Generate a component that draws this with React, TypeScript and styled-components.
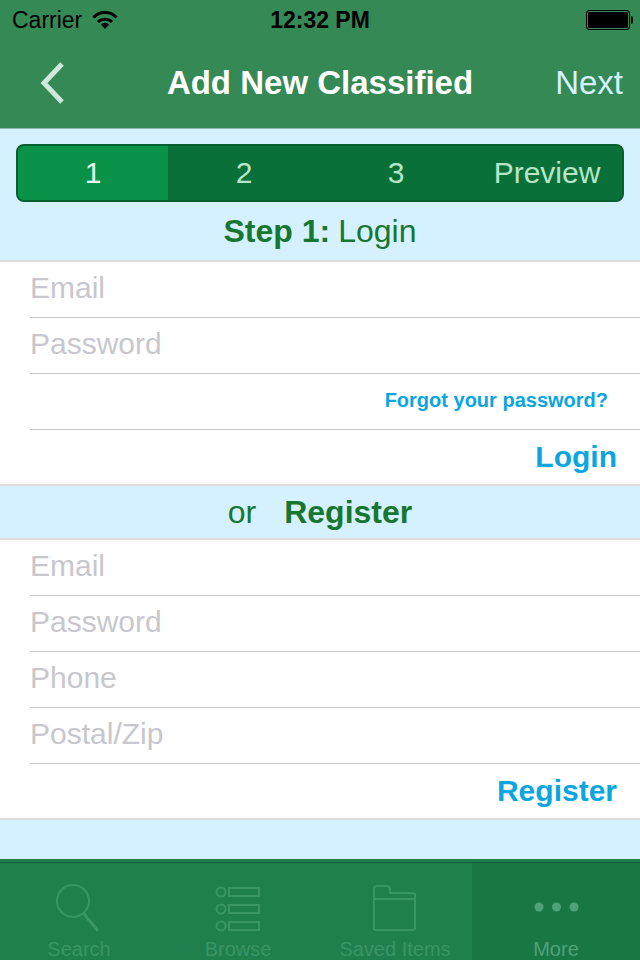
import React from 'react';
import styled, { createGlobalStyle } from 'styled-components';

const GlobalStyle = createGlobalStyle`
  html, body { margin: 0; padding: 0; background: #d5f1ff; }
  body { font-family: "Liberation Sans", Arial, sans-serif; }
`;

const Screen = styled.div`
  width: 640px;
  height: 960px;
  display: flex;
  flex-direction: column;
  overflow: hidden;
  background: #d5f1ff;
`;

const Header = styled.header`
  height: 128px;
  background: #358955;
  border-bottom: 1px solid #8fb6a8;
  display: flex;
  flex-direction: column;
  flex-shrink: 0;
`;

const StatusBar = styled.div`
  height: 40px;
  display: grid;
  grid-template-columns: 1fr auto 1fr;
  align-items: center;
  padding: 0 12px;
  color: #000;
  font-size: 23px;
`;

const Carrier = styled.div`
  display: flex;
  align-items: center;
  gap: 10px;
`;

const Clock = styled.div`
  font-weight: 700;
  font-size: 23px;
`;

const Battery = styled.div`
  justify-self: end;
  width: 44px;
  height: 20px;
  box-sizing: border-box;
  border: 1px solid #000;
  border-radius: 3px;
  background: #000;
  box-shadow: inset 0 0 0 1px #358955;
  position: relative;
  margin-right: -2px;
  &::after {
    content: '';
    position: absolute;
    right: -4px;
    top: 5px;
    width: 2px;
    height: 8px;
    background: #000;
    border-radius: 0 2px 2px 0;
  }
`;

const NavBar = styled.div`
  flex: 1;
  display: grid;
  grid-template-columns: 150px 1fr 150px;
  align-items: center;
  padding-bottom: 3px;
`;

const BackButton = styled.div`
  padding-left: 40px;
  display: flex;
  align-items: center;
`;

const Title = styled.div`
  text-align: center;
  color: #fff;
  font-weight: 700;
  font-size: 33px;
  white-space: nowrap;
`;

const NextButton = styled.div`
  text-align: right;
  padding-right: 17px;
  color: #d5f1ff;
  font-size: 33px;
`;

const Stepper = styled.div`
  margin: 15px 16px 0;
  height: 58px;
  box-sizing: border-box;
  border: 2px solid #055f2e;
  border-radius: 8px;
  background: #0a7039;
  display: grid;
  grid-template-columns: 150px 152px 152px 1fr;
  overflow: hidden;
`;

const Step = styled.div<{ $active?: boolean }>`
  display: flex;
  align-items: center;
  justify-content: center;
  font-size: 30px;
  background: ${p => (p.$active ? '#0a9348' : 'transparent')};
  color: ${p => (p.$active ? '#e6f7ee' : '#b5e6c8')};
`;

const SectionHeading = styled.div<{ $height: number }>`
  height: ${p => p.$height}px;
  display: flex;
  align-items: center;
  justify-content: center;
  font-size: 32px;
  color: #17762f;
  flex-shrink: 0;
`;

const HeadingBold = styled.b<{ $gap: number }>`
  font-weight: 700;
  margin-right: ${p => p.$gap}px;
`;

const HeadingOr = styled.span`
  margin-right: 28px;
`;

const Card = styled.section`
  background: #fff;
  border-top: 2px solid #dedede;
  border-bottom: 2px solid #dedede;
  flex-shrink: 0;
`;

const Field = styled.div`
  height: 56px;
  box-sizing: border-box;
  margin-left: 30px;
  border-bottom: 1px solid #c8c8c8;
  display: flex;
  align-items: center;
  padding-bottom: 3px;
`;

const Placeholder = styled.span`
  color: #c7c7cd;
  font-size: 30px;
`;

const ForgotLink = styled.a`
  margin-left: auto;
  margin-right: 32px;
  color: #0ba5e0;
  font-size: 20px;
  font-weight: 700;
`;

const ActionRow = styled.div`
  height: 54px;
  display: flex;
  align-items: center;
  justify-content: flex-end;
  padding-right: 23px;
`;

const ActionLink = styled.a`
  color: #0ba5e0;
  font-size: 30px;
  font-weight: 700;
`;

const TabBar = styled.nav`
  margin-top: auto;
  height: 101px;
  box-sizing: border-box;
  background: #1f804d;
  padding-top: 3px;
  flex-shrink: 0;
`;

const TabRow = styled.div`
  height: 98px;
  border-top: 1px solid #135c37;
  display: grid;
  grid-template-columns: 158px 160px 154px 168px;
`;

const Tab = styled.div<{ $active?: boolean }>`
  display: flex;
  flex-direction: column;
  align-items: center;
  background: ${p => (p.$active ? '#187745' : 'transparent')};
  color: ${p => (p.$active ? '#4fa278' : '#3a9566')};
  font-size: 20px;
`;

const TabIcon = styled.svg`
  margin-top: 20px;
  margin-bottom: 5px;
  display: block;
`;

const WifiIcon = () => (
  <svg width="26" height="20" viewBox="0 0 26 20">
    <path d="M1.5 7.5a16 16 0 0 1 23 0" fill="none" stroke="#000" strokeWidth="3" />
    <path d="M6 12a10 10 0 0 1 14 0" fill="none" stroke="#000" strokeWidth="3" />
    <path d="M13 19l-4-4.6a5.6 5.6 0 0 1 8 0z" fill="#000" />
  </svg>
);

const App = () => (
  <Screen>
    <GlobalStyle />
    <Header>
      <StatusBar>
        <Carrier>
          Carrier
          <WifiIcon />
        </Carrier>
        <Clock>12:32 PM</Clock>
        <Battery />
      </StatusBar>
      <NavBar>
        <BackButton>
          <svg width="26" height="44" viewBox="0 0 26 44">
            <path d="M22 3L4 22l18 19" fill="none" stroke="#cfe8da" strokeWidth="5" />
          </svg>
        </BackButton>
        <Title>Add New Classified</Title>
        <NextButton>Next</NextButton>
      </NavBar>
    </Header>

    <Stepper>
      <Step $active>1</Step>
      <Step>2</Step>
      <Step>3</Step>
      <Step>Preview</Step>
    </Stepper>

    <SectionHeading $height={58}>
      <HeadingBold $gap={8}>Step 1:</HeadingBold>
      Login
    </SectionHeading>

    <Card>
      <Field><Placeholder>Email</Placeholder></Field>
      <Field><Placeholder>Password</Placeholder></Field>
      <Field><ForgotLink>Forgot your password?</ForgotLink></Field>
      <ActionRow><ActionLink>Login</ActionLink></ActionRow>
    </Card>

    <SectionHeading $height={52}>
      <HeadingOr>or</HeadingOr>
      <HeadingBold $gap={0}>Register</HeadingBold>
    </SectionHeading>

    <Card>
      <Field><Placeholder>Email</Placeholder></Field>
      <Field><Placeholder>Password</Placeholder></Field>
      <Field><Placeholder>Phone</Placeholder></Field>
      <Field><Placeholder>Postal/Zip</Placeholder></Field>
      <ActionRow><ActionLink>Register</ActionLink></ActionRow>
    </Card>

    <TabBar>
      <TabRow>
        <Tab>
          <TabIcon width="46" height="50" viewBox="0 0 46 50" fill="none" stroke="#3a9566" strokeWidth="2">
            <circle cx="17" cy="18" r="16" />
            <path d="M28 31l14 17" strokeWidth="3" />
          </TabIcon>
          Search
        </Tab>
        <Tab>
          <TabIcon width="46" height="50" viewBox="0 0 46 50" fill="none" stroke="#3a9566" strokeWidth="2">
            <circle cx="6" cy="9" r="4.5" />
            <rect x="14" y="5" width="30" height="8" />
            <circle cx="6" cy="26" r="4.5" />
            <rect x="14" y="22" width="30" height="8" />
            <circle cx="6" cy="43" r="4.5" />
            <rect x="14" y="39" width="30" height="8" />
          </TabIcon>
          Browse
        </Tab>
        <Tab>
          <TabIcon width="46" height="50" viewBox="0 0 46 50" fill="none" stroke="#3a9566" strokeWidth="2">
            <path d="M2 46V6a3 3 0 0 1 3-3h10a3 3 0 0 1 3 3v4h23a2 2 0 0 1 2 2v33a2 2 0 0 1-2 2H4a2 2 0 0 1-2-2z" />
            <path d="M2 16h42" />
          </TabIcon>
          Saved Items
        </Tab>
        <Tab $active>
          <TabIcon width="46" height="50" viewBox="0 0 46 50" fill="#4fa278">
            <circle cx="6" cy="24" r="4.5" />
            <circle cx="23.5" cy="24" r="4.5" />
            <circle cx="41" cy="24" r="4.5" />
          </TabIcon>
          More
        </Tab>
      </TabRow>
    </TabBar>
  </Screen>
);

export default App;
